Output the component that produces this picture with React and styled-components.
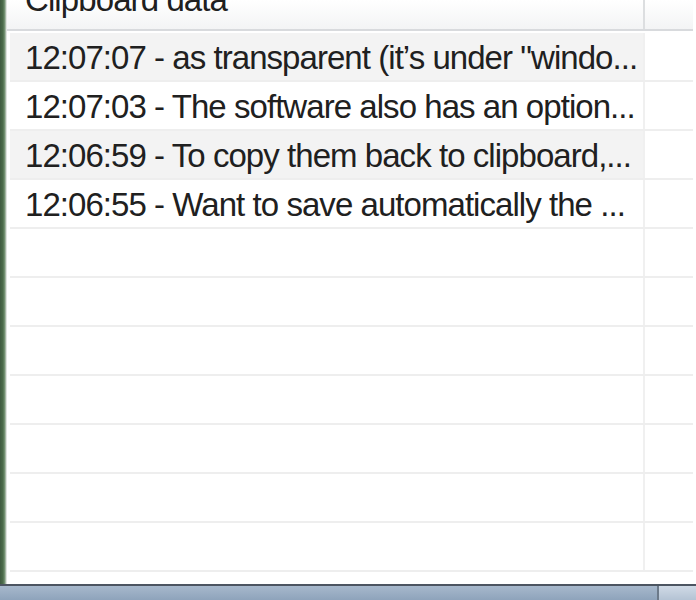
import styled, { createGlobalStyle } from 'styled-components';

const GlobalStyle = createGlobalStyle`
  html, body {
    margin: 0;
    padding: 0;
    background: #ffffff;
    overflow: hidden;
  }
  * { box-sizing: border-box; }
`;

const Screen = styled.div`
  width: 696px;
  height: 600px;
  display: flex;
  flex-direction: column;
  font-family: "Liberation Sans", Arial, sans-serif;
  color: #202020;
`;

const Body = styled.div`
  flex: 1;
  display: flex;
  min-height: 0;
`;

const WindowEdge = styled.div`
  width: 7px;
  background: linear-gradient(to right, #3f5a40 0, #4d6d4c 3px, #7d9a7c 5px, #c9d2c9 6px, #f4f4f4 7px);
`;

const ListView = styled.div`
  flex: 1;
  display: flex;
  flex-direction: column;
  padding-right: 3px;
  overflow: hidden;
`;

const Header = styled.div`
  height: 31px;
  flex: none;
  display: grid;
  grid-template-columns: 638px 1fr;
  background: linear-gradient(#ffffff, #f3f4f5);
  border-bottom: 2px solid #d8dadd;
  overflow: hidden;
`;

const HeaderCell = styled.div`
  padding-left: 18px;
  border-right: ${p => (p.$last ? 'none' : '2px solid #dcdee0')};
  font-size: 33px;
  letter-spacing: -0.9px;
  line-height: 1;
  overflow: hidden;
`;

const HeaderLabel = styled.span`
  display: block;
  margin-top: -17px;
  white-space: nowrap;
`;

const Rows = styled.div`
  flex: 1;
  display: flex;
  flex-direction: column;
  padding: 2px 0 0 3px;
`;

const Row = styled.div`
  height: 49px;
  flex: none;
  display: grid;
  grid-template-columns: 635px 1fr;
  border-bottom: 2px solid #eeeeee;
`;

const Cell = styled.div`
  display: flex;
  align-items: center;
  padding: 3px 0 0 15px;
  background: ${p => (p.$shaded ? '#f3f3f3' : 'transparent')};
  border-right: ${p => (p.$last ? 'none' : '2px solid #f0f0f0')};
  font-size: 33px;
  letter-spacing: -0.95px;
  white-space: nowrap;
  overflow: hidden;
`;

const StatusStrip = styled.div`
  height: 16px;
  flex: none;
  display: grid;
  grid-template-columns: 657px 1fr;
  border-top: 2px solid #4c5561;
`;

const StripPart = styled.div`
  background: ${p => (p.$light
    ? 'linear-gradient(#d0dae6, #b4c3d4)'
    : 'linear-gradient(#a7b8cc, #8ea3bb)')};
  border-left: ${p => (p.$light ? '2px solid #6c7a8a' : 'none')};
`;

const entries = [
  '12:07:07 - as transparent (it\u2019s under "windo...',
  '12:07:03 - The software also has an option...',
  '12:06:59 - To copy them back to clipboard,...',
  '12:06:55 - Want to save automatically the ...',
];

const TOTAL_ROWS = 11;

export default function App() {
  const rows = Array.from({ length: TOTAL_ROWS }, (_, i) => entries[i] || '');
  return (
    <>
      <GlobalStyle />
      <Screen>
        <Body>
          <WindowEdge />
          <ListView>
            <Header>
              <HeaderCell>
                <HeaderLabel>Clipboard data</HeaderLabel>
              </HeaderCell>
              <HeaderCell $last />
            </Header>
            <Rows>
              {rows.map((text, i) => (
                <Row key={i}>
                  <Cell $shaded={text && i % 2 === 0}>{text}</Cell>
                  <Cell $last />
                </Row>
              ))}
            </Rows>
          </ListView>
        </Body>
        <StatusStrip>
          <StripPart />
          <StripPart $light />
        </StatusStrip>
      </Screen>
    </>
  );
}
